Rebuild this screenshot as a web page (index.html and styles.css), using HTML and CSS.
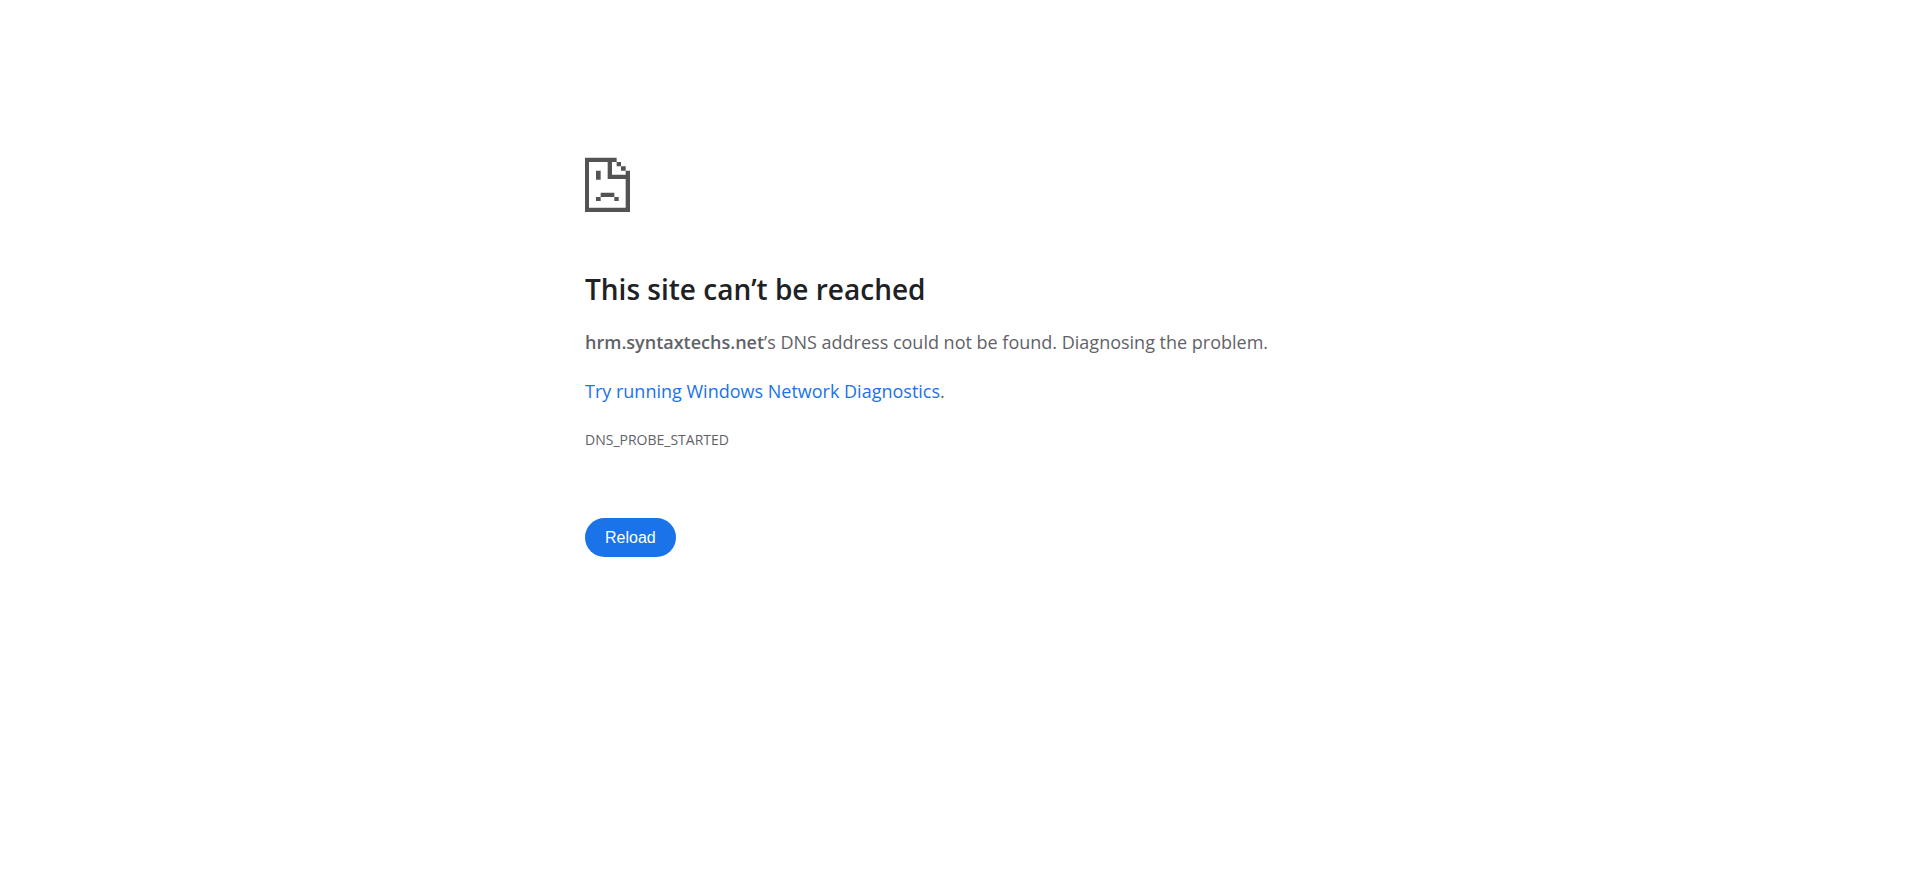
FILE: index.html
```html
<!DOCTYPE html>
<html lang="en">
<head>
<meta charset="utf-8">
<meta name="viewport" content="width=device-width, initial-scale=1">
<title>hrm.syntaxtechs.net</title>
<link rel="stylesheet" href="styles.css">
</head>
<body>
<main class="error-page">
  <svg class="error-icon" viewBox="0 0 135 165" aria-hidden="true">
    <path d="M0 2H95V15H81V53H122V41H135V165H0ZM12 15V152H122V66H68V15ZM95 15H108V28H95ZM108 28H122V41H108ZM33 41H47V68H33ZM47 107H88V120H47ZM33 120H47V132H33ZM88 120H101V132H88Z" fill-rule="evenodd"/>
  </svg>
  <h1 class="title">This site can’t be reached</h1>
  <p class="message"><strong class="host">hrm.syntaxtechs.net</strong>’s DNS address could not be found. Diagnosing the problem.</p>
  <p class="message"><a class="link" href="#">Try running Windows Network Diagnostics</a>.</p>
  <p class="error-code">DNS_PROBE_STARTED</p>
  <button class="reload" type="button">Reload</button>
</main>
</body>
</html>
```
FILE: styles.css
```css
body {
  margin: 0;
  background: #fff;
  color: #5f6368;
  font-family: "Segoe UI", "Open Sans", "Noto Sans", sans-serif;
  font-size: 18px;
  line-height: 30px;
}

.error-page {
  box-sizing: border-box;
  max-width: 750px;
  margin: 0 auto;
  padding-top: 157px;
}

.error-icon {
  display: block;
  width: 45px;
  height: 55px;
  fill: #535353;
}

.title {
  margin: 58px 0 19px;
  color: #202124;
  font-size: 28px;
  font-weight: 600;
  line-height: 38px;
}

.message {
  margin: 0 0 19px;
}

.host {
  font-weight: 600;
}

.link {
  color: #1a73e8;
  text-decoration: none;
}

.error-code {
  margin: 0;
  font-size: 14px;
}

.reload {
  display: block;
  margin-top: 63px;
  padding: 0 20px;
  border: 0;
  border-radius: 20px;
  background: #1a73e8;
  color: #fff;
  font-family: "Liberation Sans", Arial, sans-serif;
  font-size: 16px;
  line-height: 39px;
  cursor: pointer;
}
```
